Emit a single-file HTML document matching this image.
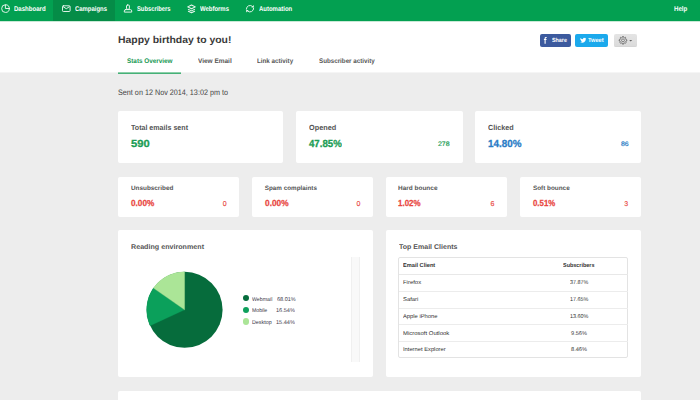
<!DOCTYPE html>
<html><head><meta charset="utf-8">
<style>
*{margin:0;padding:0;box-sizing:border-box}
html,body{width:700px;height:400px;overflow:hidden;background:#ededed}
body{position:relative;font-family:"Liberation Sans", sans-serif}
.a{position:absolute}
.t{position:absolute;white-space:nowrap;line-height:1;font-family:"Liberation Sans", sans-serif;text-rendering:geometricPrecision}
.card{position:absolute;background:#fff;border-radius:2px}
</style></head><body>
<!-- nav -->
<div class="a" style="left:0;top:0;width:700px;height:21px;background:#03a051"></div>
<div class="a" style="left:53px;top:0;width:62px;height:21px;background:#058c47"></div>
<svg class="a" style="left:0;top:0" width="300" height="21" viewBox="0 0 300 21">
  <g fill="none" stroke="#eaf7ef" stroke-width="0.95" stroke-linecap="round" stroke-linejoin="round">
    <circle cx="5.5" cy="8.6" r="3.85"/>
    <path d="M5.4 4.9 V8.5 H9.2"/>
    <rect x="62.5" y="5.8" width="7.6" height="5.7" rx="0.8"/>
    <path d="M63.3 6.8 L66.3 8.7 L69.3 6.8"/>
    <rect x="126.5" y="5.0" width="2.9" height="4.3" rx="1"/>
    <path d="M125.6 9.6 H130.4 Q131.7 9.6 131.7 10.9 V12.1 H124.3 V10.9 Q124.3 9.6 125.6 9.6 Z"/>
    <path d="M191.5 5.0 L195.3 6.9 L191.5 8.8 L187.7 6.9 Z" stroke-width="1.05"/>
    <path d="M188.4 9.4 L191.5 10.9 L194.6 9.4" stroke-width="1.05"/>
    <path d="M188.4 11.2 L191.5 12.7 L194.6 11.2" stroke-width="1.05"/>
    <path d="M246.35 9.2 A3.7 3.7 0 0 1 252.5 6.4"/>
    <path d="M253.65 8.2 A3.7 3.7 0 0 1 247.5 11.0"/>
  </g>
  <g fill="#eaf7ef">
    <path d="M253.8 5.0 L253.8 7.5 L251.3 7.5 Z"/>
    <path d="M246.2 12.4 L246.2 9.9 L248.7 9.9 Z"/>
  </g>
</svg>
<!-- header -->
<div class="a" style="left:0;top:21px;width:700px;height:51px;background:#fff"></div>
<div class="a" style="left:0;top:72px;width:700px;height:1px;background:#f5f5f5"></div>
<div class="a" style="left:0;top:21px;width:700px;height:1px;background:#c9e9d6"></div>
<div class="a" style="left:118px;top:72px;width:63px;height:1px;background:#8ccfa9"></div>
<div class="a" style="left:118px;top:73px;width:63px;height:1px;background:#46b077"></div>
<div class="a" style="left:539.5px;top:34.3px;width:31.5px;height:12.4px;background:#3c5a9e;border-radius:2px"></div>
<div class="a" style="left:575.4px;top:34.3px;width:32.6px;height:12.4px;background:#1ba9ec;border-radius:2px"></div>
<div class="a" style="left:614.3px;top:34.3px;width:22.7px;height:12.4px;background:linear-gradient(#e4e4e4,#dadada);border-radius:2px;box-shadow:inset 0 -0.6px 0 #d0d0d0"></div>
<svg class="a" style="left:530px;top:30px" width="120" height="20" viewBox="530 30 120 20">
  <path d="M544.55 43.7 V40.0 H543.9 V39.1 H544.55 V38.4 Q544.55 37.1 545.9 37.1 H546.7 V38.0 H546.15 Q545.65 38.0 545.65 38.5 V39.1 H546.6 L546.45 40.0 H545.65 V43.7 Z" fill="#fff"/>
  <path transform="translate(582.6 40.1) scale(0.82) translate(-581.2 -40.4)" d="M585.6 38.3 Q585.1 38.5 584.6 38.6 Q585.2 38.2 585.4 37.6 Q584.9 37.9 584.3 38.0 Q583.8 37.5 583.1 37.5 Q581.8 37.6 581.7 39.0 Q581.7 39.2 581.8 39.3 Q579.9 39.2 578.6 37.7 Q578.0 38.9 579.1 39.7 Q578.7 39.7 578.4 39.5 Q578.4 40.7 579.6 41.0 Q579.2 41.1 578.9 41.0 Q579.3 42.0 580.3 42.0 Q579.3 42.8 578.1 42.7 Q582.4 44.9 584.5 41.5 Q585.2 40.2 585.1 38.9 Q585.4 38.7 585.6 38.3 Z" fill="#fff"/>
  <path d="M622.35 37.42 L622.49 36.53 L623.51 36.53 L623.65 37.42 L624.15 37.58 L624.61 37.82 L625.34 37.29 L626.06 38.01 L625.53 38.74 L625.77 39.20 L625.93 39.70 L626.82 39.84 L626.82 40.86 L625.93 41.00 L625.77 41.50 L625.53 41.96 L626.06 42.69 L625.34 43.41 L624.61 42.88 L624.15 43.12 L623.65 43.28 L623.51 44.17 L622.49 44.17 L622.35 43.28 L621.85 43.12 L621.39 42.88 L620.66 43.41 L619.94 42.69 L620.47 41.96 L620.23 41.50 L620.07 41.00 L619.18 40.86 L619.18 39.84 L620.07 39.70 L620.23 39.20 L620.47 38.74 L619.94 38.01 L620.66 37.29 L621.39 37.82 L621.85 37.58 Z" fill="none" stroke="#6a6a6a" stroke-width="0.9" stroke-linejoin="round"/>
  <circle cx="623" cy="40.35" r="1.45" fill="none" stroke="#6a6a6a" stroke-width="0.8"/>
  <path d="M629.2 40.0 H632.2 L630.7 41.4 Z" fill="#606060"/>
</svg>
<!-- cards row1 -->
<div class="card" style="left:118px;top:111px;width:165.3px;height:52px"></div>
<div class="card" style="left:296.4px;top:111px;width:166.2px;height:52px"></div>
<div class="card" style="left:475.4px;top:111px;width:165.6px;height:52px"></div>
<!-- row2 -->
<div class="card" style="left:118px;top:177px;width:121px;height:39.5px"></div>
<div class="card" style="left:252px;top:177px;width:121px;height:39.5px"></div>
<div class="card" style="left:386px;top:177px;width:121px;height:39.5px"></div>
<div class="card" style="left:520px;top:177px;width:121px;height:39.5px"></div>
<!-- row3 -->
<div class="card" style="left:118px;top:230px;width:255px;height:146.6px"></div>
<div class="card" style="left:386px;top:230px;width:255px;height:146.6px"></div>
<!-- row4 -->
<div class="card" style="left:118px;top:391px;width:523px;height:20px"></div>
<!-- pie -->
<svg class="a" style="left:140px;top:265px" width="90" height="90" viewBox="140 265 90 90">
  <circle cx="184.6" cy="309.8" r="38" fill="#066c3c"/>
  <path d="M184.6 309.8 L150.1 325.7 A38 38 0 0 1 153.4 288.1 Z" fill="#0ba05b" stroke="#0ba05b" stroke-width="0.3"/>
  <path d="M184.6 309.8 L153.4 288.1 A38 38 0 0 1 184.6 271.8 Z" fill="#abe597" stroke="#abe597" stroke-width="0.3"/>
</svg>
<div class="a" style="left:242.5px;top:294.9px;width:6.6px;height:6.6px;border-radius:50%;background:#066c3c"></div>
<div class="a" style="left:242.5px;top:306.6px;width:6.6px;height:6.6px;border-radius:50%;background:#0ea05c"></div>
<div class="a" style="left:242.5px;top:318.3px;width:6.6px;height:6.6px;border-radius:50%;background:#abe597"></div>
<!-- scrollbar -->
<div class="a" style="left:351px;top:257px;width:9px;height:105px;background:#f9f9f9;border-left:0.6px solid #f0f0f0;border-right:0.6px solid #f0f0f0"></div>
<!-- table -->
<div class="a" style="left:398px;top:257px;width:229.5px;height:101px;border:0.6px solid #e3e3e3;border-radius:2px"></div>
<div class="a" style="left:398.5px;top:274.3px;width:229px;height:0.6px;background:#e8e8e8"></div>
<div class="a" style="left:398.5px;top:291px;width:229px;height:0.6px;background:#ececec"></div>
<div class="a" style="left:398.5px;top:307.6px;width:229px;height:0.6px;background:#ececec"></div>
<div class="a" style="left:398.5px;top:324.2px;width:229px;height:0.6px;background:#ececec"></div>
<div class="a" style="left:398.5px;top:340.9px;width:229px;height:0.6px;background:#ececec"></div>
<div class="t" style="left:13.55px;top:7px;font-size:6.9px;font-weight:700;color:#ffffff;transform:scaleX(0.8772);transform-origin:0 0">Dashboard</div>
<div class="t" style="left:74.93px;top:7px;font-size:6.9px;font-weight:700;color:#ffffff;transform:scaleX(0.8598);transform-origin:0 0">Campaigns</div>
<div class="t" style="left:136.82px;top:7px;font-size:6.9px;font-weight:700;color:#ffffff;transform:scaleX(0.8420);transform-origin:0 0">Subscribers</div>
<div class="t" style="left:199.90px;top:7px;font-size:6.9px;font-weight:700;color:#ffffff;transform:scaleX(0.8630);transform-origin:0 0">Webforms</div>
<div class="t" style="left:258.71px;top:7px;font-size:6.9px;font-weight:700;color:#ffffff;transform:scaleX(0.8674);transform-origin:0 0">Automation</div>
<div class="t" style="left:673.84px;top:7px;font-size:6.9px;font-weight:700;color:#ffffff;transform:scaleX(0.8928);transform-origin:0 0">Help</div>
<div class="t" style="left:118.28px;top:36px;font-size:10.0px;font-weight:700;color:#3a3a3a;transform:scaleX(1.0413);transform-origin:0 0">Happy birthday to you!</div>
<div class="t" style="left:126.61px;top:59px;font-size:6.7px;font-weight:700;color:#159752;transform:scaleX(0.9494);transform-origin:0 0">Stats Overview</div>
<div class="t" style="left:197.70px;top:59px;font-size:6.7px;font-weight:700;color:#555555;transform:scaleX(0.9674);transform-origin:0 0">View Email</div>
<div class="t" style="left:256.73px;top:59px;font-size:6.7px;font-weight:700;color:#555555;transform:scaleX(0.9348);transform-origin:0 0">Link activity</div>
<div class="t" style="left:318.81px;top:59px;font-size:6.7px;font-weight:700;color:#555555;transform:scaleX(0.9310);transform-origin:0 0">Subscriber activity</div>
<div class="t" style="left:552.01px;top:38px;font-size:6.0px;font-weight:700;color:#ffffff;transform:scaleX(0.8942);transform-origin:0 0">Share</div>
<div class="t" style="left:588.10px;top:38px;font-size:6.0px;font-weight:700;color:#ffffff;transform:scaleX(0.9420);transform-origin:0 0">Tweet</div>
<div class="t" style="left:117.93px;top:89px;font-size:8.0px;font-weight:400;color:#444444;transform:scaleX(0.9026);transform-origin:0 0">Sent on 12 Nov 2014, 13:02 pm to</div>
<div class="t" style="left:131.00px;top:124px;font-size:7.4px;font-weight:700;color:#555555;transform:scaleX(0.9591);transform-origin:0 0">Total emails sent</div>
<div class="t" style="left:309.10px;top:124px;font-size:7.4px;font-weight:700;color:#555555;transform:scaleX(0.9878);transform-origin:0 0">Opened</div>
<div class="t" style="left:487.81px;top:124px;font-size:7.4px;font-weight:700;color:#555555;transform:scaleX(0.9765);transform-origin:0 0">Clicked</div>
<div class="t" style="left:130.67px;top:140px;font-size:10.3px;font-weight:700;color:#1c9d55;transform:scaleX(1.0872);transform-origin:0 0;-webkit-text-stroke:0.3px currentColor">590</div>
<div class="t" style="left:309.31px;top:140px;font-size:10.3px;font-weight:700;color:#1c9d55;transform:scaleX(0.9371);transform-origin:0 0;-webkit-text-stroke:0.3px currentColor">47.85%</div>
<div class="t" style="left:487.53px;top:140px;font-size:10.3px;font-weight:700;color:#2a7cc6;transform:scaleX(0.9567);transform-origin:0 0;-webkit-text-stroke:0.3px currentColor">14.80%</div>
<div class="t" style="left:438.47px;top:142px;font-size:6.4px;font-weight:400;color:#1c9d55;transform:scaleX(1.0871);transform-origin:0 0;-webkit-text-stroke:0.2px currentColor">278</div>
<div class="t" style="left:620.78px;top:142px;font-size:6.4px;font-weight:400;color:#2a7cc6;transform:scaleX(1.0812);transform-origin:0 0;-webkit-text-stroke:0.2px currentColor">86</div>
<div class="t" style="left:130.80px;top:186px;font-size:6.3px;font-weight:700;color:#555555;transform:scaleX(1.0106);transform-origin:0 0">Unsubscribed</div>
<div class="t" style="left:130.82px;top:199px;font-size:8.8px;font-weight:700;color:#e9473f;transform:scaleX(0.9334);transform-origin:0 0;-webkit-text-stroke:0.25px currentColor">0.00%</div>
<div class="t" style="left:222.80px;top:201px;font-size:7.0px;font-weight:400;color:#e9473f;-webkit-text-stroke:0.15px currentColor">0</div>
<div class="t" style="left:264.80px;top:186px;font-size:6.3px;font-weight:700;color:#555555">Spam complaints</div>
<div class="t" style="left:264.62px;top:199px;font-size:8.8px;font-weight:700;color:#e9473f;transform:scaleX(0.9457);transform-origin:0 0;-webkit-text-stroke:0.25px currentColor">0.00%</div>
<div class="t" style="left:356.50px;top:201px;font-size:7.0px;font-weight:400;color:#e9473f;-webkit-text-stroke:0.15px currentColor">0</div>
<div class="t" style="left:398.49px;top:186px;font-size:6.3px;font-weight:700;color:#555555;transform:scaleX(1.0264);transform-origin:0 0">Hard bounce</div>
<div class="t" style="left:398.45px;top:199px;font-size:8.8px;font-weight:700;color:#e9473f;transform:scaleX(0.9039);transform-origin:0 0;-webkit-text-stroke:0.25px currentColor">1.02%</div>
<div class="t" style="left:490.60px;top:201px;font-size:7.0px;font-weight:400;color:#e9473f;-webkit-text-stroke:0.15px currentColor">6</div>
<div class="t" style="left:532.70px;top:186px;font-size:6.3px;font-weight:700;color:#555555;transform:scaleX(1.0085);transform-origin:0 0">Soft bounce</div>
<div class="t" style="left:532.53px;top:199px;font-size:8.8px;font-weight:700;color:#e9473f;transform:scaleX(0.8924);transform-origin:0 0;-webkit-text-stroke:0.25px currentColor">0.51%</div>
<div class="t" style="left:624.20px;top:201px;font-size:7.0px;font-weight:400;color:#e9473f;-webkit-text-stroke:0.15px currentColor">3</div>
<div class="t" style="left:130.59px;top:245px;font-size:6.9px;font-weight:700;color:#555555;transform:scaleX(1.0364);transform-origin:0 0">Reading environment</div>
<div class="t" style="left:399.10px;top:245px;font-size:6.9px;font-weight:700;color:#555555;transform:scaleX(1.0203);transform-origin:0 0">Top Email Clients</div>
<div class="t" style="left:402.91px;top:264px;font-size:5.8px;font-weight:700;color:#333333;transform:scaleX(0.9706);transform-origin:0 0">Email Client</div>
<div class="t" style="left:563.31px;top:264px;font-size:5.8px;font-weight:700;color:#333333;transform:scaleX(0.9398);transform-origin:0 0">Subscribers</div>
<div class="t" style="left:402.78px;top:281px;font-size:5.6px;font-weight:400;color:#333333;transform:scaleX(1.0590);transform-origin:0 0">Firefox</div>
<div class="t" style="left:569.86px;top:281px;font-size:5.6px;font-weight:400;color:#333333;transform:scaleX(0.9617);transform-origin:0 0">37.87%</div>
<div class="t" style="left:402.99px;top:298px;font-size:5.6px;font-weight:400;color:#333333;transform:scaleX(1.0508);transform-origin:0 0">Safari</div>
<div class="t" style="left:569.66px;top:298px;font-size:5.6px;font-weight:400;color:#333333;transform:scaleX(0.9721);transform-origin:0 0">17.65%</div>
<div class="t" style="left:403.20px;top:315px;font-size:5.6px;font-weight:400;color:#333333;transform:scaleX(1.0332);transform-origin:0 0">Apple iPhone</div>
<div class="t" style="left:569.66px;top:315px;font-size:5.6px;font-weight:400;color:#333333;transform:scaleX(0.9721);transform-origin:0 0">13.60%</div>
<div class="t" style="left:402.77px;top:332px;font-size:5.6px;font-weight:400;color:#333333;transform:scaleX(1.0631);transform-origin:0 0">Microsoft Outlook</div>
<div class="t" style="left:571.05px;top:332px;font-size:5.6px;font-weight:400;color:#333333">9.56%</div>
<div class="t" style="left:402.68px;top:348px;font-size:5.6px;font-weight:400;color:#333333;transform:scaleX(1.0310);transform-origin:0 0">Internet Explorer</div>
<div class="t" style="left:571.05px;top:348px;font-size:5.6px;font-weight:400;color:#333333">8.46%</div>
<div class="t" style="left:252.00px;top:298px;font-size:5.6px;font-weight:400;color:#3d3a4a;transform:scaleX(0.9374);transform-origin:0 0">Webmail</div>
<div class="t" style="left:276.50px;top:298px;font-size:5.6px;font-weight:400;color:#3d3a4a;transform:scaleX(0.9831);transform-origin:0 0">68.01%</div>
<div class="t" style="left:251.63px;top:309px;font-size:5.6px;font-weight:400;color:#3d3a4a;transform:scaleX(0.9256);transform-origin:0 0">Mobile</div>
<div class="t" style="left:276.30px;top:309px;font-size:5.6px;font-weight:400;color:#3d3a4a;transform:scaleX(0.9938);transform-origin:0 0">16.54%</div>
<div class="t" style="left:251.62px;top:321px;font-size:5.6px;font-weight:400;color:#3d3a4a;transform:scaleX(0.9584);transform-origin:0 0">Desktop</div>
<div class="t" style="left:276.30px;top:321px;font-size:5.6px;font-weight:400;color:#3d3a4a;transform:scaleX(0.9938);transform-origin:0 0">15.44%</div>
</body></html>
